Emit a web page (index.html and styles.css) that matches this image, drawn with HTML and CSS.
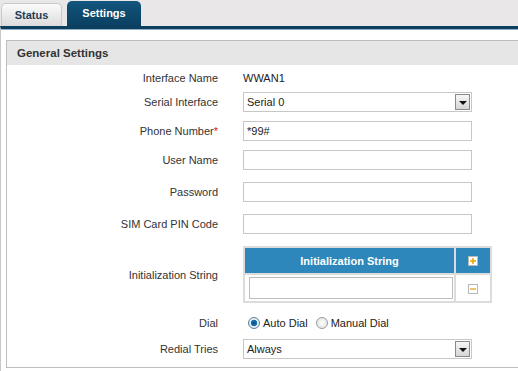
FILE: index.html
```html
<!DOCTYPE html>
<html lang="en">
<head>
    <meta charset="UTF-8">
    <title>WWAN Settings</title>
    <link rel="stylesheet" href="styles.css">
</head>
<body>
    <div class="tabs">
        <div class="tab">Status</div>
        <div class="tab active">Settings</div>
    </div>
    <div class="content">
        <div class="panel">
            <div class="panel-title">General Settings</div>
            <div class="form">
                <div class="label">Interface Name</div>
                <div class="value">WWAN1</div>

                <div class="label">Serial Interface</div>
                <div class="value">
                    <div class="select"><span>Serial 0</span><span class="arrow"></span></div>
                </div>

                <div class="label">Phone Number<span class="req">*</span></div>
                <div class="value"><input type="text" class="field" value="*99#"></div>

                <div class="label">User Name</div>
                <div class="value"><input type="text" class="field"></div>

                <div class="label">Password</div>
                <div class="value"><input type="password" class="field"></div>

                <div class="label">SIM Card PIN Code</div>
                <div class="value"><input type="text" class="field"></div>

                <div class="label">Initialization String</div>
                <div class="value">
                    <table class="init-table">
                        <tr>
                            <th>Initialization String</th>
                            <th class="btn-cell">
                                <svg class="icon" width="10" height="10" viewBox="0 0 10 10">
                                    <rect x="0.5" y="0.5" width="9" height="9" fill="#fff" stroke="#b8b8b8"/>
                                    <rect x="2" y="4.2" width="6" height="1.6" fill="#f2a800"/>
                                    <rect x="4.2" y="2" width="1.6" height="6" fill="#f2a800"/>
                                </svg>
                            </th>
                        </tr>
                        <tr>
                            <td><input type="text" class="field wide"></td>
                            <td class="btn-cell">
                                <svg class="icon" width="10" height="10" viewBox="0 0 10 10">
                                    <rect x="0.5" y="0.5" width="9" height="9" fill="#fff" stroke="#b8b8b8"/>
                                    <rect x="2" y="4.2" width="6" height="1.6" fill="#e9b54a"/>
                                </svg>
                            </td>
                        </tr>
                    </table>
                </div>

                <div class="label">Dial</div>
                <div class="value radios">
                    <label><input type="radio" name="dial" checked> Auto Dial</label>
                    <label><input type="radio" name="dial"> Manual Dial</label>
                </div>

                <div class="label">Redial Tries</div>
                <div class="value">
                    <div class="select"><span>Always</span><span class="arrow"></span></div>
                </div>
            </div>
        </div>
    </div>
</body>
</html>
```
FILE: styles.css
```css
html, body {
    overflow: hidden;
}
body {
    margin: 0;
    font-family: "Liberation Sans", Arial, sans-serif;
    font-size: 11px;
    color: #333;
    background-color: #e9e7e7;
}
.tabs {
    display: flex;
    align-items: flex-end;
    height: 26px;
    padding-left: 1px;
    gap: 5px;
}
.tab {
    height: 23px;
    width: 61px;
    box-sizing: border-box;
    line-height: 22px;
    text-align: center;
    font-weight: bold;
    color: #1d3d58;
    background: linear-gradient(#fbfbfb, #dcdcdc);
    border: 1px solid #c9c9c9;
    border-bottom: none;
    border-radius: 5px 5px 0 0;
}
.tab.active {
    height: 25px;
    width: 74px;
    line-height: 25px;
    color: #fff;
    background: linear-gradient(#11557e, #0b4060);
    border: none;
}
.content {
    height: 345px;
    background-color: #fff;
    border-top: 3px solid #0c3f5e;
    border-left: 1px solid #c8c8c8;
    box-shadow: inset 0 1px 0 #8fb0c8;
    padding: 11px 0 0 5px;
    box-sizing: border-box;
}
.panel {
    border: 1px solid #bdbdbd;
    border-right: none;
    height: 326px;
}
.panel-title {
    height: 24px;
    line-height: 24px;
    padding-left: 10px;
    background-color: #e6e6e6;
    font-size: 11.5px;
    font-weight: bold;
    color: #333;
}
.form {
    display: grid;
    grid-template-columns: 211px 1fr;
    grid-template-rows: 24px 24px 34px 24px 40px 24px 77px 20px 32px;
    column-gap: 25px;
    padding-top: 1px;
}
.label {
    display: flex;
    align-items: center;
    justify-content: flex-end;
    color: #333;
}
.req {
    color: #d42020;
}
.value {
    display: flex;
    align-items: center;
    color: #222;
}
.field {
    width: 229px;
    height: 20px;
    box-sizing: border-box;
    border: 1px solid #c7c7c7;
    padding: 0 3px;
    margin: 0;
    font-family: inherit;
    font-size: 11px;
    color: #222;
    outline: none;
}
.select {
    width: 229px;
    height: 20px;
    box-sizing: border-box;
    border: 1px solid #c7c7c7;
    display: flex;
    align-items: center;
    justify-content: space-between;
    padding: 0 1px 0 3px;
    color: #222;
}
.arrow {
    width: 15px;
    height: 16px;
    box-sizing: border-box;
    border: 1px solid #8a8a8a;
    background: linear-gradient(#f6f6f6, #d6d6d6);
    position: relative;
}
.arrow::after {
    content: "";
    position: absolute;
    left: 3px;
    top: 6px;
    border-left: 4px solid transparent;
    border-right: 4px solid transparent;
    border-top: 4px solid #111;
}
.init-table {
    background-color: #dcdcdc;
    border-spacing: 2px;
    width: 249px;
}
.init-table th {
    background-color: #2e87ba;
    color: #fff;
    font-weight: bold;
    height: 25px;
    padding: 0;
    font-size: 11px;
}
.init-table td {
    background-color: #fff;
    height: 26px;
    padding: 0 0 0 4px;
}
.init-table .btn-cell {
    width: 34px;
    padding: 0;
    text-align: center;
}
.icon {
    display: block;
    margin: 1px auto 0;
}
.field.wide {
    width: 204px;
    height: 22px;
    border-color: #bdbdbd;
}
.radios {
    gap: 3px;
}
.radios label {
    display: flex;
    align-items: center;
    gap: 3px;
}
.radios input {
    appearance: none;
    width: 12px;
    height: 12px;
    margin: 0 0 0 5px;
    border-radius: 50%;
    border: 1px solid #9c9c9c;
    background: radial-gradient(#fff, #dedede);
}
.radios input:checked {
    border-color: #5f7f99;
    background: radial-gradient(circle, #0a4a7c 0, #2277b8 3px, #e9f2f8 3.6px, #d6e3ee 6px);
}
```
